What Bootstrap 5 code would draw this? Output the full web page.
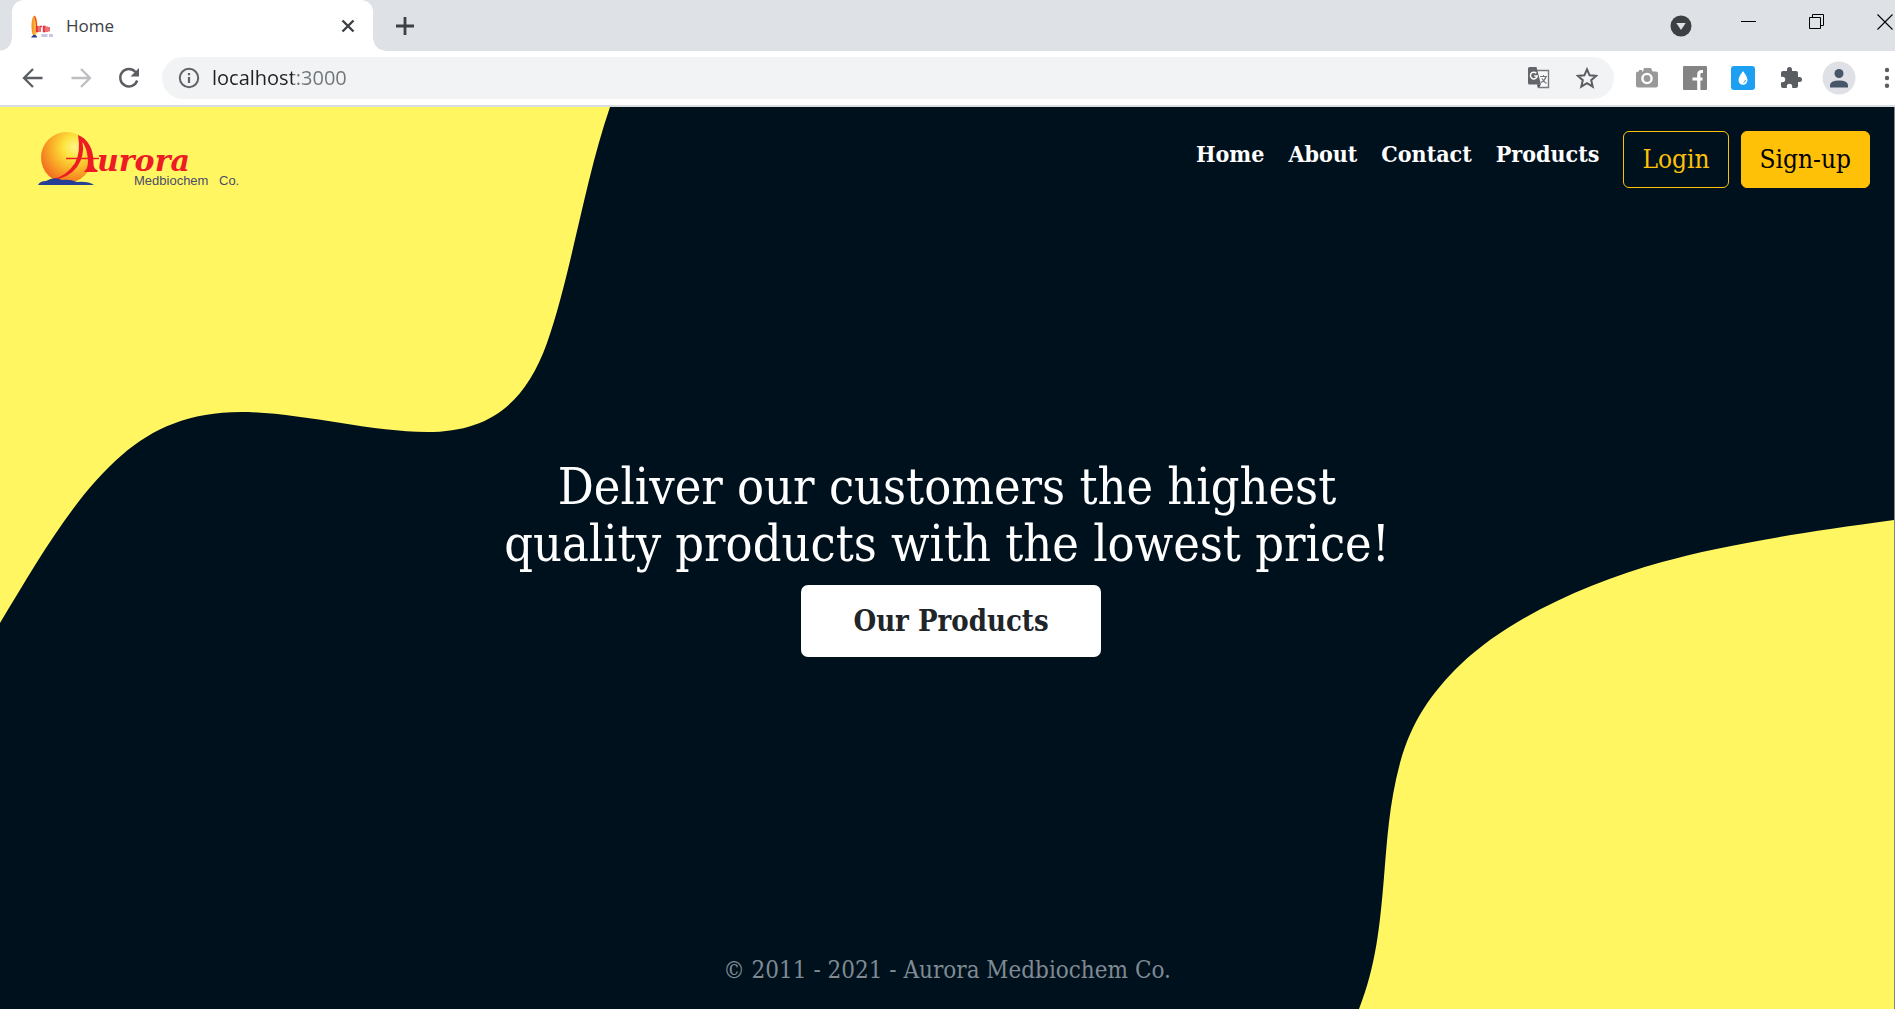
<!DOCTYPE html>
<html lang="en">
<head>
<meta charset="utf-8">
<meta name="viewport" content="width=device-width, initial-scale=1">
<title>Home</title>
<link href="https://cdn.jsdelivr.net/npm/bootstrap@5.3.0/dist/css/bootstrap.min.css" rel="stylesheet">
<style>
  body { font-family: "DejaVu Serif Condensed", "DejaVu Serif", serif; background: #00111e; overflow: hidden; }
  svg { display: block; flex: none; }
  .plain-btn { border: 0; background: none; padding: 0; display: flex; align-items: center; justify-content: center; flex: none; }

  /* browser frame */
  .frame { font-family: "Open Sans", "Noto Sans", sans-serif; color: #3c4043; }
  .tab-strip { height: 51px; background: #dee1e6; padding-left: 12px; }
  .tab-page { width: 361px; background: #fff; border-radius: 12px 12px 0 0; padding: 0 15px 0 18px; position: relative; font-size: 17px; }
  .tab-page::before, .tab-page::after { content: ""; position: absolute; bottom: 0; width: 12px; height: 12px; }
  .tab-page::before { left: -12px; background: radial-gradient(circle at 0 0, transparent 11px, #fff 12px); }
  .tab-page::after { right: -12px; background: radial-gradient(circle at 100% 0, transparent 11px, #fff 12px); }
  .win-btns { margin-right: -24px; }
  .win-btns .plain-btn { width: 68px; }
  .tool-row { height: 54px; background: #fff; padding-left: 9px; }
  .tool-row .plain-btn { width: 48px; height: 42px; }
  .ext-btns { margin-right: -16px; }
  .frame-line { height: 2px; background: #d9dce0; }
  .omnibox { height: 42px; border-radius: 21px; background: #f1f3f4; margin: 0 9px; padding: 0 3px 0 16px; }
  .omnibox input { border: 0; outline: 0; min-width: 0; font-size: 20px; line-height: 28px; padding: 0; color: #202124;
    background: linear-gradient(90deg, #202124 85px, #70757a 85px); -webkit-background-clip: text; background-clip: text; -webkit-text-fill-color: transparent; }

  /* page */
  .site { border-right: 1px solid #7d858c; }
  .site-nav a { color: #fff; font-size: 23px; font-weight: 700; line-height: 38px; text-decoration: none; }
  .site-btn { font-size: 26px; line-height: 37px; padding: 9px 18px; --bs-btn-border-radius: 6px; border-radius: 6px; }
  .btn-login { color: #ffc107; border-color: #ffc107; }
  .btn-join { color: #000; background: #ffc107; border-color: #ffc107; }
  .hero { padding-bottom: 52px; }
  .hero h1 { font-size: 50px; line-height: 57px; max-width: 920px; margin-bottom: 12px; }
  .btn-hero { font-size: 29px; font-weight: 700; line-height: 42px; padding: 14px 51px; border-radius: 7px; background: #fff; color: #212529; }
  .site-foot { color: #7f8a93; font-size: 24px; line-height: 36px; padding-bottom: 21px; }
</style>
<script src="https://cdn.jsdelivr.net/npm/bootstrap@5.3.0/dist/js/bootstrap.bundle.min.js"></script>
</head>
<body class="d-flex flex-column vh-100">

<div class="frame">
  <div class="tab-strip d-flex">
    <div class="tab-page d-flex align-items-center">
      <svg width="24" height="24" viewBox="0 0 24 24"><defs><linearGradient id="fav"><stop offset="0" stop-color="#f58220"/><stop offset="1" stop-color="#fde34a"/></linearGradient></defs><ellipse cx="4.500" cy="12" rx="3" ry="10.500" fill="url(#fav)"/><path d="M4.500 2.500Q6.500 5 7 18" fill="none" stroke="#e8323a" stroke-width="1.200"/><path d="M6.500 12v5.500h1.500V12M10 18v-5.500h2M13.500 12.500v5h1.500v-5zM17 18v-5.500M19 13v4.500" fill="none" stroke="#e8323a" stroke-width="1.400"/><path d="M1 23.500q3-5 6-1v1z" fill="#2b3990"/><path d="M11.500 21.500h6M19 21.500h4" stroke="#c9c6e6" stroke-width="3"/></svg>
      <span class="flex-grow-1 ms-2 ps-1">Home</span>
      <button class="plain-btn" aria-label="Close tab"><svg width="20" height="20" viewBox="0 0 20 20"><path d="M4.500 4.500l11 11M15.500 4.500l-11 11" stroke="#3c4043" stroke-width="2.400"/></svg></button>
    </div>
    <button class="plain-btn ms-3 ps-1" aria-label="New tab"><svg width="24" height="24" viewBox="0 0 24 24"><path d="M12 3v18M3 12h18" stroke="#3c4043" stroke-width="2.800"/></svg></button>
    <div class="win-btns d-flex ms-auto">
      <button class="plain-btn" aria-label="Search tabs"><svg width="22" height="22" viewBox="0 0 22 22"><circle cx="11" cy="11" r="10.500" fill="#3c4043"/><path d="M6.300 8h9.400l-4.700 7z" fill="#dee1e6"/></svg></button>
      <button class="plain-btn pb-2" aria-label="Minimize"><svg width="16" height="16" viewBox="0 0 16 16"><path d="M0 7.500h15" stroke="#000"/></svg></button>
      <button class="plain-btn pb-2" aria-label="Restore"><svg width="16" height="16" viewBox="0 0 16 16"><path d="M.5 3.500h11v11H.5zM3.500 3.500v-3h11v11h-3" fill="none" stroke="#000"/></svg></button>
      <button class="plain-btn pb-2" aria-label="Close"><svg width="16" height="16" viewBox="0 0 16 16"><path d="M.5.5l15 15M15.500.5l-15 15" stroke="#000" stroke-width="1.100"/></svg></button>
    </div>
  </div>

  <div class="tool-row d-flex align-items-center">
    <button class="plain-btn" aria-label="Back"><svg width="22" height="22" viewBox="0 0 22 22"><path d="M20.500 11H2.500M11 2l-9 9 9 9" fill="none" stroke="#5a5d61" stroke-width="2.300"/></svg></button>
    <button class="plain-btn" aria-label="Forward"><svg width="22" height="22" viewBox="0 0 22 22"><path d="M1.500 11h18M11 2l9 9-9 9" fill="none" stroke="#bcbec1" stroke-width="2.300"/></svg></button>
    <button class="plain-btn" aria-label="Reload"><svg width="22" height="22" viewBox="0 0 22 22"><path d="M19.200 13.500a8.700 8.700 0 1 1-1.700-8.500" fill="none" stroke="#5a5d61" stroke-width="2.400"/><path d="M21 1v8.500h-8.500z" fill="#5a5d61"/></svg></button>
    <div class="omnibox d-flex align-items-center flex-grow-1">
      <svg width="22" height="22" viewBox="0 0 22 22"><circle cx="11" cy="11" r="9.200" fill="none" stroke="#5f6368" stroke-width="2"/><path d="M11 10v6M11 6v2.300" stroke="#5f6368" stroke-width="2.200"/></svg>
      <input class="flex-grow-1 ms-2 ps-1" type="text" value="localhost:3000" aria-label="Address">
      <button class="plain-btn" aria-label="Translate"><svg width="24" height="24" viewBox="0 0 24 24"><path d="M10 4.500h11.500v17H12" fill="#f8f9fa" stroke="#77797c" stroke-width="1.400"/><path d="M13 10.500h7M16.500 9v1.500M19 10.500q-1 4-5 6M15 12.500q1.500 3 4.500 5" fill="none" stroke="#77797c" stroke-width="1.200"/><path d="M2.500 1H9.500L14 18.500H2.500A1.500 1.500 0 0 1 1 17V2.500A1.500 1.500 0 0 1 2.500 1z" fill="#626569"/><path d="M10 18.500h4l-3 4z" fill="#4a4d51"/><path d="M9.300 7.200a3.400 3.400 0 1 0 .9 2.800H7.200" fill="none" stroke="#fff" stroke-width="1.500"/></svg></button>
      <button class="plain-btn" aria-label="Bookmark"><svg width="22" height="22" viewBox="0 0 22 22"><path d="M11 2.300l2.600 6 6.500.6-4.900 4.300 1.500 6.400L11 16.200l-5.700 3.400 1.500-6.400L1.900 8.900l6.500-.6z" fill="none" stroke="#5a5d61" stroke-width="2"/></svg></button>
    </div>
    <div class="ext-btns d-flex">
      <button class="plain-btn" aria-label="Screenshot"><svg width="22" height="22" viewBox="0 0 22 22"><path d="M2 4.500h1V3h3v1.500h1L8 1h7l1.500 3.500H20a2 2 0 0 1 2 2v12a2 2 0 0 1-2 2H2a2 2 0 0 1-2-2v-12a2 2 0 0 1 2-2z" fill="#999"/><circle cx="11" cy="11.500" r="4.600" fill="#999" stroke="#fff" stroke-width="2.400"/></svg></button>
      <button class="plain-btn" aria-label="Facebook extension"><svg width="24" height="24" viewBox="0 0 24 24"><rect width="24" height="24" rx="1" fill="#848484"/><path d="M20 5.500h-1.500q-2.700 0-2.700 3V24M9.500 13h10" fill="none" stroke="#fff" stroke-width="3.200"/></svg></button>
      <button class="plain-btn" aria-label="Drop extension"><svg width="24" height="24" viewBox="0 0 24 24"><rect width="24" height="24" rx="3" fill="#1d9ff2"/><path d="M12 5q4.500 6 4.500 9a4.500 4.800 0 0 1-9 0q0-3 4.500-9z" fill="#fff"/><path d="M14.500 14q-.2 2-2 2.500" fill="none" stroke="#1d9ff2"/></svg></button>
      <button class="plain-btn" aria-label="Extensions"><svg width="24" height="24" viewBox="0 0 24 24"><path d="M20.500 11H19V7a2 2 0 0 0-2-2h-4V3.500a2.500 2.500 0 0 0-5 0V5H4a2 2 0 0 0-2 2v3.800h1.500a2.700 2.700 0 0 1 0 5.400H2V20a2 2 0 0 0 2 2h3.800v-1.500a2.700 2.700 0 0 1 5.400 0V22H17a2 2 0 0 0 2-2v-4h1.500a2.500 2.500 0 0 0 0-5z" fill="#5a5d61"/></svg></button>
      <button class="plain-btn" aria-label="Profile"><svg width="34" height="34" viewBox="0 0 34 34"><circle cx="17" cy="17" r="16.500" fill="#dfe1e6"/><circle cx="17" cy="12.500" r="4.500" fill="#48566a"/><path d="M8 26.500v-2.300q0-4.700 9-4.700t9 4.700v2.300z" fill="#48566a"/></svg></button>
      <button class="plain-btn" aria-label="Menu"><svg width="6" height="22" viewBox="0 0 6 22"><g fill="#5a5d61"><circle cx="3" cy="3" r="2.200"/><circle cx="3" cy="11" r="2.200"/><circle cx="3" cy="18.800" r="2.200"/></g></svg></button>
    </div>
  </div>
  <div class="frame-line"></div>
</div>

<div class="site position-relative flex-grow-1 d-flex flex-column">
  <svg class="position-absolute top-0 start-0 w-100 h-100" viewBox="0 107 1894 902" preserveAspectRatio="none" aria-hidden="true">
    <g fill="#fff661">
      <path d="M0 107H610C584 183 571 275 547 343C525 404 489 432 427 432C370 432 298 412 241 412C190 412 153 428 122 455C76 494 38 560 0 623z"/>
      <path d="M1894 520C1790 534 1720 546 1662 562C1590 582 1510 617 1460 665C1432 692 1411 722 1400 763C1389 804 1387 842 1384 877C1380 925 1376 966 1359 1009H1894z"/>
    </g>
  </svg>

  <header class="position-relative d-flex justify-content-between align-items-start p-4">
    <a href="#" class="ms-2" aria-label="Aurora Medbiochem Co.">
      <svg width="212" height="60" viewBox="32 131 212 60">
        <defs><radialGradient id="sun" cx=".66" cy=".3" r=".75"><stop offset="0" stop-color="#fff58a"/><stop offset=".3" stop-color="#fde23c"/><stop offset=".65" stop-color="#f9a825"/><stop offset="1" stop-color="#f26a21"/></radialGradient></defs>
        <circle cx="66.500" cy="157.500" r="25.500" fill="url(#sun)"/>
        <path d="M78 135C88 139 94 149 93.500 164Q93.500 169 98 170.500L97 172H84L85 170.500Q88 169 88 160Q87 148 82.500 142Q85 156 77 167Q68 179 51 180Q67 176 75 163Q81 152 78 135z" fill="#ed1c24"/>
        <path d="M66 158.500H99" stroke="#ed1c24" stroke-width="1.300"/>
        <path d="M38 185Q40 181 46 181Q54 176 62 180Q70 179 77 182Q88 181 94 185z" fill="#243f94"/>
        <text x="97" y="171" font-family="DejaVu Serif" font-weight="700" font-style="italic" font-size="30" fill="#ed1c24">urora</text>
        <text x="134" y="185" font-family="Liberation Sans" font-size="13" fill="#4b4b6b">Medbiochem</text>
        <text x="219" y="185" font-family="Liberation Sans" font-size="13" fill="#4b4b6b">Co.</text>
      </svg>
    </a>
    <div class="d-flex align-items-start">
      <nav class="site-nav d-flex gap-4 me-4 pt-1">
        <a href="#">Home</a><a href="#">About</a><a href="#">Contact</a><a href="#">Products</a>
      </nav>
      <div class="d-flex gap-2">
        <button class="btn site-btn btn-login me-1">Login</button>
        <button class="btn site-btn btn-join">Sign-up</button>
      </div>
    </div>
  </header>

  <main class="hero position-relative my-auto text-center d-flex flex-column align-items-center">
    <h1 class="text-white fw-normal">Deliver our customers the highest quality products with the lowest price!</h1>
    <button class="btn btn-hero ms-2">Our Products</button>
  </main>

  <footer class="site-foot position-relative text-center">© 2011 - 2021 - Aurora Medbiochem Co.</footer>
</div>
</body>
</html>
